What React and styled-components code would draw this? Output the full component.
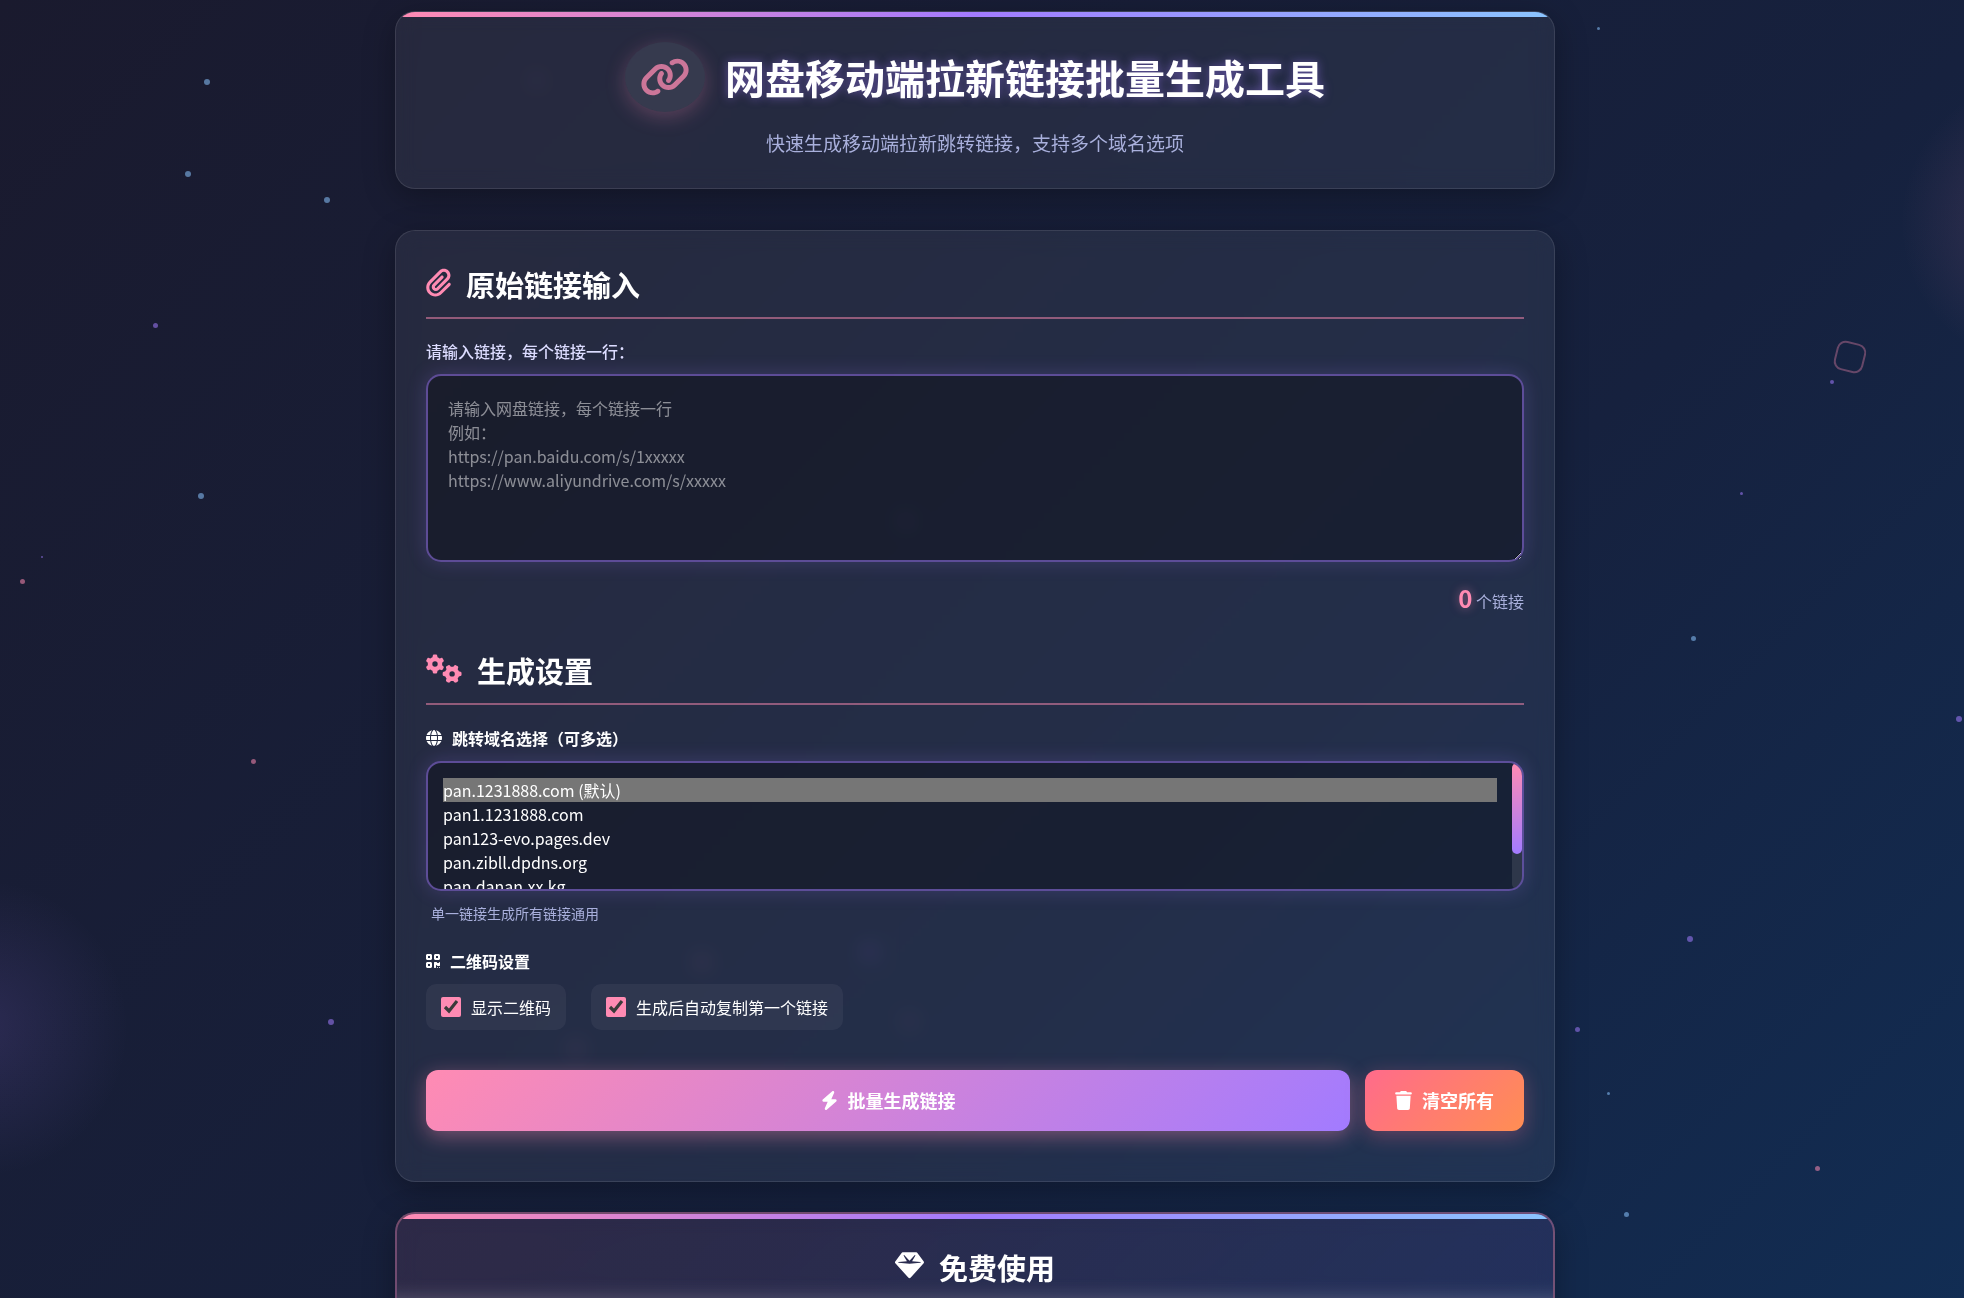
import React, { useState } from 'react';
import styled, { createGlobalStyle } from 'styled-components';
import {
  FaBolt,
  FaGears,
  FaGem,
  FaGlobe,
  FaLink,
  FaPaperclip,
  FaQrcode,
  FaTrash,
} from 'react-icons/fa6';

const colors = {
  pink: '#ff8bb3',
  purple: '#a27bff',
  blue: '#8bc5ff',
  text: '#ffffff',
  label: '#dcdcff',
  muted: '#a9b0dc',
};

const GlobalStyle = createGlobalStyle`
  * {
    box-sizing: border-box;
    margin: 0;
    padding: 0;
  }

  body {
    font-family: 'Noto Sans CJK SC', sans-serif;
    font-size: 16px;
    line-height: 25px;
    color: ${colors.text};
    background: #16213e;
  }
`;

const Page = styled.div`
  position: relative;
  height: 100vh;
  overflow: hidden;
  padding: 11px 14px 0 0;
  background: linear-gradient(135deg, #1a1a2e 0%, #16213e 62%, #0f3460 123%);
`;

const Backdrop = styled.div`
  position: absolute;
  inset: 0;
  overflow: hidden;
  pointer-events: none;
`;

const Particle = styled.span`
  position: absolute;
  left: ${props => props.$x}%;
  top: ${props => props.$y}%;
  width: ${props => props.$size}px;
  height: ${props => props.$size}px;
  border-radius: 50%;
  background: ${props => colors[props.$color]};
  opacity: 0.55;
`;

const Blob = styled.span`
  position: absolute;
  width: 300px;
  height: 300px;
  border-radius: 50%;
  background: radial-gradient(circle, ${props => props.$tint} 0%, transparent 70%);
`;

const LeftBlob = styled(Blob)`
  left: -170px;
  bottom: 120px;
`;

const RightBlob = styled(Blob)`
  right: -235px;
  top: 72px;
`;

const Shape = styled.span`
  position: absolute;
  right: 99px;
  top: 342px;
  width: 30px;
  height: 30px;
  border: 2px solid ${colors.pink};
  border-radius: 9px;
  opacity: 0.35;
  transform: rotate(14deg);
`;

const Container = styled.main`
  position: relative;
  max-width: 1200px;
  margin: 0 auto;
  padding: 0 20px;
`;

const Card = styled.section`
  position: relative;
  margin-bottom: 30px;
  padding: 30px;
  border: 1px solid rgba(255, 255, 255, 0.1);
  border-radius: 20px;
  background: rgba(255, 255, 255, 0.06);
  backdrop-filter: blur(10px);
  box-shadow: 0 8px 32px rgba(0, 0, 0, 0.3);
  overflow: hidden;
`;

const TopBar = styled.div`
  position: absolute;
  top: 0;
  left: 0;
  right: 0;
  height: 5px;
  background: linear-gradient(90deg, ${colors.pink}, ${colors.purple}, ${colors.blue});
`;

const HeaderCard = styled(Card).attrs({ as: 'header' })`
  margin-bottom: 41px;
  text-align: center;
`;

const TitleRow = styled.div`
  display: flex;
  align-items: center;
  justify-content: center;
  gap: 20px;
  margin-bottom: 15px;
`;

const Icon = styled.span`
  display: inline-flex;
  flex: none;
  color: ${props => props.$color || 'inherit'};

  svg {
    width: ${props => props.$w}px;
    height: ${props => props.$h}px;
  }
`;

const HeadingIcon = styled(Icon)`
  padding-bottom: 4px;
`;

const LogoBadge = styled(Icon)`
  padding: 15px;
  border-radius: 50%;
  background: rgba(255, 255, 255, 0.08);
  box-shadow: 0 5px 20px rgba(255, 139, 179, 0.25);

  svg {
    opacity: 0.75;
  }
`;

const PageTitle = styled.h1`
  font-size: 40px;
  line-height: 64px;
  font-weight: 700;
  text-shadow: 0 0 10px rgba(162, 123, 255, 0.5);
`;

const Subtitle = styled.p`
  font-size: 19px;
  line-height: 31px;
  color: ${colors.muted};
`;

const SectionTitle = styled.h2`
  display: flex;
  align-items: center;
  gap: 15px;
  margin-bottom: 20px;
  padding-bottom: 10px;
  border-bottom: 2px solid rgba(255, 139, 179, 0.5);
  font-size: 29px;
  line-height: 46px;
  font-weight: 700;
`;

const FieldLabel = styled.label`
  display: flex;
  align-items: center;
  gap: 10px;
  margin-bottom: 10px;
  line-height: ${props => (props.$strong ? 26 : 25)}px;
  font-weight: ${props => (props.$strong ? 700 : 500)};
  color: ${props => (props.$strong ? colors.text : colors.label)};
`;

const LinkInput = styled.textarea`
  display: block;
  width: 100%;
  height: 188px;
  padding: 20px;
  border: 2px solid rgba(162, 123, 255, 0.5);
  border-radius: 15px;
  outline: none;
  background: rgba(0, 0, 0, 0.3);
  box-shadow: 0 0 20px rgba(162, 123, 255, 0.2);
  color: ${colors.text};
  font: inherit;
  line-height: 24px;
  resize: vertical;

  &::placeholder {
    color: rgba(255, 255, 255, 0.5);
  }
`;

const Counter = styled.div`
  margin: 17px 0 27px;
  line-height: 38px;
  text-align: right;
  color: ${colors.muted};

  strong {
    font-size: 24px;
    font-weight: 700;
    color: ${colors.pink};
    text-shadow: 0 0 10px rgba(255, 139, 179, 0.5);
  }
`;

const SelectFrame = styled.div`
  position: relative;
  height: 130px;
  border: 2px solid rgba(162, 123, 255, 0.5);
  border-radius: 15px;
  background: rgba(0, 0, 0, 0.3);
  box-shadow: 0 0 20px rgba(162, 123, 255, 0.2);
  overflow: hidden;
`;

const DomainSelect = styled.select`
  display: block;
  width: 100%;
  height: 100%;
  padding: 15px 25px 15px 15px;
  border: none;
  outline: none;
  background: transparent;
  color: ${colors.text};
  font: inherit;
  overflow-y: scroll;
  scrollbar-width: none;

  option {
    height: 24px;
    min-height: 24px;
    padding: 0;
    line-height: 24px;
    color: ${colors.text};
  }

  option:checked {
    background: #767676 linear-gradient(#767676, #767676);
    color: ${colors.text};
  }
`;

const ScrollTrack = styled.div`
  position: absolute;
  top: 0;
  right: 0;
  bottom: 0;
  width: 10px;
  border-radius: 5px;
  background: rgba(255, 255, 255, 0.1);
  pointer-events: none;
`;

const ScrollThumb = styled.div`
  height: 91px;
  border-radius: 5px;
  background: linear-gradient(${colors.pink}, ${colors.purple});
`;

const Hint = styled.p`
  margin: 10px 0 22px;
  padding-left: 5px;
  font-size: 14px;
  color: ${colors.muted};
`;

const OptionRow = styled.div`
  display: flex;
  flex-wrap: wrap;
  gap: 25px;
  margin-bottom: 40px;
`;

const CheckChip = styled.label`
  display: flex;
  align-items: center;
  gap: 10px;
  padding: 10px 15px;
  border-radius: 10px;
  background: rgba(255, 255, 255, 0.05);
  line-height: 26px;
  cursor: pointer;

  input {
    width: 20px;
    height: 20px;
    accent-color: ${colors.pink};
  }
`;

const ButtonRow = styled.div`
  display: flex;
  gap: 15px;
  margin-bottom: 20px;
`;

const Button = styled.button`
  display: flex;
  align-items: center;
  justify-content: center;
  gap: 10px;
  padding: 18px 30px;
  border: none;
  border-radius: 12px;
  color: ${colors.text};
  font: inherit;
  font-size: 18px;
  line-height: 25px;
  font-weight: 700;
  cursor: pointer;
`;

const PrimaryButton = styled(Button)`
  flex: 1;
  background: linear-gradient(135deg, ${colors.pink}, ${colors.purple});
  box-shadow: 0 5px 20px rgba(255, 139, 179, 0.4);
`;

const DangerButton = styled(Button)`
  background: linear-gradient(135deg, #ff6b8b, #ff8e53);
  box-shadow: 0 5px 20px rgba(255, 107, 139, 0.3);
`;

const PromoCard = styled(Card)`
  border: 2px solid rgba(255, 139, 179, 0.35);
  background: linear-gradient(135deg, rgba(255, 139, 179, 0.1), rgba(162, 123, 255, 0.1));
`;

const PromoTitle = styled.h2`
  display: flex;
  align-items: center;
  justify-content: center;
  gap: 15px;
  font-size: 29px;
  line-height: 46px;
  font-weight: 700;
`;

const PromoGlow = styled.div`
  height: 200px;
  margin: 10px -60px 0;
  background: rgba(255, 255, 255, 0.1);
  box-shadow: 0 0 20px rgba(255, 255, 255, 0.25);
`;

// x and y are percentages of the page, size is in pixels
const particles = [
  { x: 10.4, y: 6.1, size: 6, color: 'blue' },
  { x: 9.4, y: 13.2, size: 6, color: 'blue' },
  { x: 16.5, y: 15.2, size: 6, color: 'blue' },
  { x: 7.8, y: 24.9, size: 5, color: 'purple' },
  { x: 10.1, y: 38, size: 6, color: 'blue' },
  { x: 2.1, y: 42.8, size: 2, color: 'purple' },
  { x: 1, y: 44.6, size: 5, color: 'pink' },
  { x: 12.8, y: 58.5, size: 5, color: 'pink' },
  { x: 16.7, y: 78.5, size: 6, color: 'purple' },
  { x: 27.2, y: 6, size: 5, color: 'purple' },
  { x: 46, y: 39.9, size: 6, color: 'purple' },
  { x: 35.6, y: 73.9, size: 6, color: 'pink' },
  { x: 44.1, y: 73, size: 7, color: 'purple' },
  { x: 46.2, y: 78.5, size: 5, color: 'pink' },
  { x: 29.2, y: 80.6, size: 6, color: 'pink' },
  { x: 81.3, y: 2.1, size: 3, color: 'blue' },
  { x: 93.2, y: 29.3, size: 4, color: 'purple' },
  { x: 88.6, y: 37.9, size: 3, color: 'purple' },
  { x: 86.1, y: 49, size: 5, color: 'blue' },
  { x: 99.6, y: 55.2, size: 6, color: 'purple' },
  { x: 85.9, y: 72.1, size: 6, color: 'purple' },
  { x: 80.2, y: 79.1, size: 5, color: 'purple' },
  { x: 81.8, y: 84.1, size: 3, color: 'blue' },
  { x: 92.4, y: 89.8, size: 5, color: 'pink' },
  { x: 82.7, y: 93.4, size: 5, color: 'blue' },
];

const domains = [
  { value: 'pan.1231888.com', label: 'pan.1231888.com (默认)' },
  { value: 'pan1.1231888.com', label: 'pan1.1231888.com' },
  { value: 'pan123-evo.pages.dev', label: 'pan123-evo.pages.dev' },
  { value: 'pan.zibll.dpdns.org', label: 'pan.zibll.dpdns.org' },
  { value: 'pan.danan.xx.kg', label: 'pan.danan.xx.kg' },
  { value: 'pan.zibll.xx.kg', label: 'pan.zibll.xx.kg' },
];

const placeholder = `请输入网盘链接，每个链接一行
例如：
https://pan.baidu.com/s/1xxxxx
https://www.aliyundrive.com/s/xxxxx`;

function App() {
  const [links, setLinks] = useState('');
  const [selected, setSelected] = useState([domains[0].value]);
  const [thumbTop, setThumbTop] = useState(0);
  const [showQr, setShowQr] = useState(true);
  const [autoCopy, setAutoCopy] = useState(true);

  const count = links.split('\n').filter(line => line.trim()).length;

  const handleSelect = (e) => {
    setSelected(Array.from(e.target.selectedOptions, option => option.value));
  };

  const handleScroll = (e) => {
    const { scrollTop, scrollHeight, clientHeight } = e.target;
    setThumbTop(Math.round((scrollTop / scrollHeight) * clientHeight));
  };

  return (
    <Page>
      <GlobalStyle />
      <Backdrop>
        <LeftBlob $tint="rgba(162, 123, 255, 0.14)" />
        <RightBlob $tint="rgba(255, 139, 179, 0.17)" />
        <Shape />
        {particles.map((p, i) => (
          <Particle key={i} $x={p.x} $y={p.y} $size={p.size} $color={p.color} />
        ))}
      </Backdrop>
      <Container>
        <HeaderCard>
          <TopBar />
          <TitleRow>
            <LogoBadge $w={50} $h={40} $color={colors.pink}><FaLink /></LogoBadge>
            <PageTitle>网盘移动端拉新链接批量生成工具</PageTitle>
          </TitleRow>
          <Subtitle>快速生成移动端拉新跳转链接，支持多个域名选项</Subtitle>
        </HeaderCard>

        <Card>
          <SectionTitle>
            <HeadingIcon $w={25} $h={29} $color={colors.pink}><FaPaperclip /></HeadingIcon>
            原始链接输入
          </SectionTitle>
          <FieldLabel htmlFor="links">请输入链接，每个链接一行：</FieldLabel>
          <LinkInput
            id="links"
            placeholder={placeholder}
            value={links}
            onChange={(e) => setLinks(e.target.value)}
          />
          <Counter><strong>{count}</strong> 个链接</Counter>

          <SectionTitle>
            <HeadingIcon $w={36} $h={29} $color={colors.pink}><FaGears /></HeadingIcon>
            生成设置
          </SectionTitle>
          <FieldLabel htmlFor="domains" $strong>
            <Icon $w={16} $h={16}><FaGlobe /></Icon>
            跳转域名选择（可多选）
          </FieldLabel>
          <SelectFrame>
            <DomainSelect
              id="domains"
              multiple
              value={selected}
              onChange={handleSelect}
              onScroll={handleScroll}
            >
              {domains.map((domain) => (
                <option key={domain.value} value={domain.value}>{domain.label}</option>
              ))}
            </DomainSelect>
            <ScrollTrack>
              <ScrollThumb style={{ marginTop: thumbTop }} />
            </ScrollTrack>
          </SelectFrame>
          <Hint>单一链接生成所有链接通用</Hint>

          <FieldLabel as="div" $strong>
            <Icon $w={14} $h={16}><FaQrcode /></Icon>
            二维码设置
          </FieldLabel>
          <OptionRow>
            <CheckChip>
              <input type="checkbox" checked={showQr} onChange={(e) => setShowQr(e.target.checked)} />
              显示二维码
            </CheckChip>
            <CheckChip>
              <input type="checkbox" checked={autoCopy} onChange={(e) => setAutoCopy(e.target.checked)} />
              生成后自动复制第一个链接
            </CheckChip>
          </OptionRow>
          <ButtonRow>
            <PrimaryButton type="button">
              <Icon $w={17} $h={19}><FaBolt /></Icon>
              批量生成链接
            </PrimaryButton>
            <DangerButton type="button" onClick={() => setLinks('')}>
              <Icon $w={17} $h={19}><FaTrash /></Icon>
              清空所有
            </DangerButton>
          </ButtonRow>
        </Card>

        <PromoCard>
          <TopBar />
          <PromoTitle>
            <HeadingIcon $w={29} $h={29}><FaGem /></HeadingIcon>
            免费使用
          </PromoTitle>
          <PromoGlow />
        </PromoCard>
      </Container>
    </Page>
  );
}

export default App;
